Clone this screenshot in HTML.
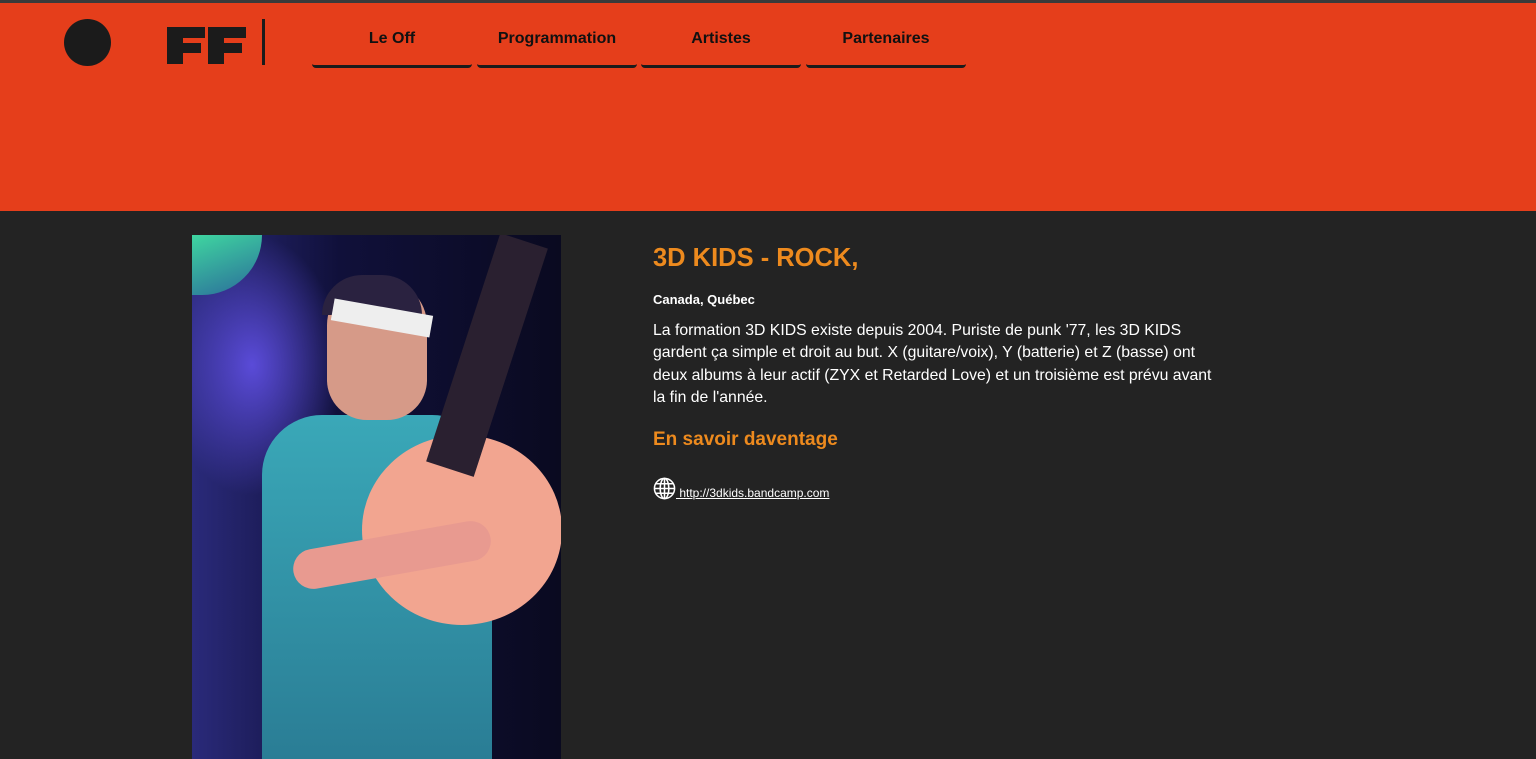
<!DOCTYPE html>
<html><head><style>
*{margin:0;padding:0;box-sizing:border-box}
body{width:1536px;height:759px;overflow:hidden;background:#232323;font-family:"Liberation Sans",sans-serif;position:relative}
.top{position:absolute;left:0;top:0;width:1536px;height:3px;background:#3a3a3a}
.hdr{position:absolute;left:0;top:3px;width:1536px;height:208px;background:#e53e1b}
.circ{position:absolute;left:64px;top:19px;width:47px;height:47px;border-radius:50%;background:#1b1b1b}
.ff{position:absolute;left:167px;top:27px}
.bar{position:absolute;left:262px;top:19px;width:3px;height:46px;background:#1b1b1b}
.nav{position:absolute;top:0;height:68px;width:160px;border-bottom:3px solid #1b1b1b;border-radius:0 0 4px 4px;text-align:center;font-weight:bold;font-size:16px;color:#111;padding-top:30px}
.img{position:absolute;left:192px;top:235px;width:369px;height:524px;overflow:hidden;
background:radial-gradient(ellipse 90px 130px at 60px 130px,#5a4bd8,transparent),linear-gradient(90deg,#2a2a7a,#10103a 40%,#0a0a20)}
h1{position:absolute;left:653px;top:244px;font-size:25.5px;color:#ed8a1e;font-weight:bold;white-space:nowrap}
.loc{position:absolute;left:653px;top:292px;font-size:13px;color:#fff;font-weight:bold}
.desc{position:absolute;left:653px;top:320px;font-size:15.8px;line-height:22.3px;color:#fff;white-space:nowrap}
.more{position:absolute;left:653px;top:429px;font-size:19px;color:#ed8a1e;font-weight:bold}
.link{position:absolute;left:653px;top:477px;font-size:12px;color:#fff;white-space:nowrap}
.link svg{vertical-align:-3px}
.link a{color:#fff;text-decoration:underline}
</style></head><body>
<div class="top"></div>
<div class="hdr"></div>
<div class="circ"></div>
<svg class="ff" width="80" height="38" viewBox="0 0 80 38"><path fill="#1b1b1b" d="M0 0H38V11H16V16H34V26H16V37H0Z M41 0H79V11H57V16H75V26H57V37H41Z"/></svg>
<div class="bar"></div>
<div class="nav" style="left:312px">Le Off</div>
<div class="nav" style="left:477px">Programmation</div>
<div class="nav" style="left:641px">Artistes</div>
<div class="nav" style="left:806px">Partenaires</div>
<div class="img">
<div style="position:absolute;left:0;top:0;width:70px;height:60px;background:linear-gradient(160deg,#3fd6a0,#2a6a9a);border-radius:0 0 80px 0"></div>
<div style="position:absolute;left:70px;top:180px;width:230px;height:344px;background:linear-gradient(180deg,#3aa8b8,#2a7d95);border-radius:60px 60px 0 0"></div>
<div style="position:absolute;left:135px;top:45px;width:100px;height:140px;background:#d69a88;border-radius:45px 45px 40px 40px"></div>
<div style="position:absolute;left:130px;top:40px;width:100px;height:40px;background:#2a2240;border-radius:50px 50px 0 0"></div>
<div style="position:absolute;left:140px;top:72px;width:100px;height:22px;background:#eee;transform:rotate(10deg)"></div>
<div style="position:absolute;left:170px;top:200px;width:200px;height:190px;background:#f2a590;border-radius:50%"></div>
<div style="position:absolute;left:270px;top:0;width:50px;height:240px;background:#2a2030;transform:rotate(18deg)"></div>
<div style="position:absolute;left:100px;top:300px;width:200px;height:40px;background:#e89a90;border-radius:20px;transform:rotate(-10deg)"></div>
</div>
<h1>3D KIDS - ROCK,</h1>
<div class="loc">Canada, Québec</div>
<div class="desc">La formation 3D KIDS existe depuis 2004. Puriste de punk '77, les 3D KIDS<br>gardent ça simple et droit au but. X (guitare/voix), Y (batterie) et Z (basse) ont<br>deux albums à leur actif (ZYX et Retarded Love) et un troisième est prévu avant<br>la fin de l'année.</div>
<div class="more">En savoir daventage</div>
<div class="link"><svg width="23" height="23" viewBox="0 0 24 24" fill="none" stroke="#fff" stroke-width="1.6"><circle cx="12" cy="12" r="10.5"/><ellipse cx="12" cy="12" rx="4.5" ry="10.5"/><path d="M12 1.5V22.5M1.5 12H22.5M3 7H21M3 17H21"/></svg><a> http://3dkids.bandcamp.com</a></div>
</body></html>
